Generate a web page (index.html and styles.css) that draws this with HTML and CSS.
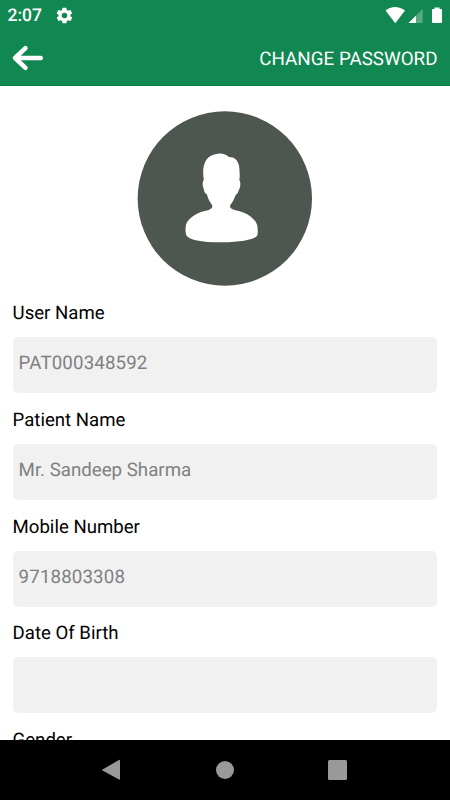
FILE: index.html
```html
<!DOCTYPE html>
<html lang="en">
<head>
<meta charset="utf-8">
<title>Profile</title>
<link rel="stylesheet" href="styles.css">
</head>
<body>
<header class="top">
  <div class="status">
    <span class="clock">2:07</span>
    <svg class="gear" width="19" height="19" viewBox="0 0 24 24"><path fill="#fff" d="M19.4 13a7.5 7.5 0 0 0 0-2l2.1-1.6c.2-.2.2-.4.1-.6l-2-3.500c-.1-.2-.4-.3-.6-.2l-2.500 1a7.300 7.300 0 0 0-1.700-1l-.4-2.600a.5.5 0 0 0-.5-.4h-4a.5.5 0 0 0-.5.4L9 5.100a7.300 7.300 0 0 0-1.700 1l-2.500-1c-.2-.1-.5 0-.6.200l-2 3.500c-.1.200-.1.500.1.600L4.500 11a7.500 7.500 0 0 0 0 2l-2.100 1.600c-.2.200-.2.400-.1.600l2 3.500c.1.200.4.300.6.200l2.500-1a7.300 7.300 0 0 0 1.700 1l.4 2.600c0 .3.200.4.500.4h4c.2 0 .5-.1.500-.4l.4-2.600a7.300 7.300 0 0 0 1.700-1l2.500 1c.2.100.5 0 .6-.2l2-3.500c.1-.2.100-.5-.1-.6zM12 15.500a3.500 3.500 0 1 1 0-7 3.500 3.500 0 0 1 0 7z"/></svg>
    <svg class="signals" width="60" height="20" viewBox="0 0 60 20">
      <path fill="#fff" d="M.5 4.500C6-.2 14-.2 20 4.500L10.300 17.300z"/>
      <path fill="#58a983" d="M37.700 3V17H23.500z"/>
      <path fill="#fff" d="M31 9.700V17h-7.500z"/>
      <path fill="#fff" d="M49.500 1.500h5V3H56q1 0 1 1v12q0 1-1 1h-8q-1 0-1-1V4q0-1 1-1h1.500z"/>
    </svg>
  </div>
  <div class="bar">
    <svg width="34" height="30" viewBox="0 0 34 30"><path d="M15.500 5.200 5 15 15.500 24.800M6 15H30.800" fill="none" stroke="#fff" stroke-width="4.500" stroke-linecap="round" stroke-linejoin="round"/></svg>
    <span class="action">CHANGE PASSWORD</span>
  </div>
</header>
<main class="content">
  <svg class="avatar" width="175" height="175" viewBox="21.500 18 525 525">
    <circle cx="285" cy="280.500" r="261.500" fill="#4e5650"/>
    <path fill="#fff" d="M265 146C280 145 290 150 297 156C318 156 329 170 329 198C330 210 330 220 328 225C333 229 333 246 326 257Q325 266 317 271C313 283 309 291 302 299C299 307 301 311 312 314C348 321 374 337 382 360Q385 374 383 390C379 402 340 412 276 412C212 412 177 405 169 390Q165 375 169 357C178 337 203 321 237 315C247 311 250 305 246 299C239 290 234 279 231 268C225 265 223 260 221 249C218 243 217 231 222 225C216 188 222 149 265 146Z"/>
  </svg>
  <section class="field"><label>User Name</label><div class="box numeric">PAT000348592</div></section>
  <section class="field"><label>Patient Name</label><div class="box">Mr. Sandeep Sharma</div></section>
  <section class="field"><label>Mobile Number</label><div class="box numeric">9718803308</div></section>
  <section class="field"><label>Date Of Birth</label><div class="box"></div></section>
  <section class="field"><label>Gender</label><div class="box"></div></section>
</main>
<nav class="nav">
  <svg width="20" height="22" viewBox="0 0 20 22"><path fill="#999" d="M1.500 10.500 18 1q1-.5 1 .5v18.500q0 1-1 .5L1.500 11.500q-1-.5 0-1z"/></svg>
  <svg width="20" height="20" viewBox="0 0 20 20"><circle cx="10" cy="10" r="9" fill="#999"/></svg>
  <svg width="20" height="20" viewBox="0 0 20 20"><rect x="0" y="0" width="19" height="20" rx="1.500" fill="#999"/></svg>
</nav>
</body>
</html>
```

FILE: styles.css
```css
* { box-sizing: border-box; }
body {
  margin: 0;
  width: 450px;
  height: 800px;
  display: flex;
  flex-direction: column;
  overflow: hidden;
  background: #fff;
  font-family: Roboto, sans-serif;
  text-rendering: geometricPrecision;
}
.top {
  height: 86px;
  flex: none;
  background: #118751;
  border-bottom: 1px solid #087c42;
  color: #fff;
}
.status {
  height: 30px;
  display: flex;
  align-items: center;
  padding: 1px 5px 0 7.500px;
}
.clock {
  font-size: 17.500px;
  line-height: 30px;
  padding-top: 1px;
  font-weight: 500;
  width: 47.500px;
}
.signals { margin-left: auto; }
.bar {
  height: 56px;
  display: flex;
  align-items: center;
  justify-content: space-between;
  padding: 0 12.500px 0 10px;
}
.action { font-size: 18.800px; padding-top: 1px; }
.content {
  flex: 1;
  min-height: 0;
  overflow: hidden;
  padding: 25px 12.800px 0 12.600px;
}
.avatar { display: block; margin: 0 0 10px 124.400px; }
.field { height: 106.800px; }
.field label {
  display: block;
  height: 41px;
  line-height: 34px;
  font-size: 18.600px;
  color: #000;
}
.box {
  height: 56px;
  border-radius: 5px;
  background: #f1f1f1;
  color: #808080;
  padding-left: 6px;
  font-size: 18.700px;
  line-height: 53px;
}
.numeric { letter-spacing: .14px; }
.nav {
  height: 60px;
  flex: none;
  background: #000;
  display: flex;
  align-items: center;
  justify-content: space-between;
  padding: 0 102px 0 101px;
}
```
